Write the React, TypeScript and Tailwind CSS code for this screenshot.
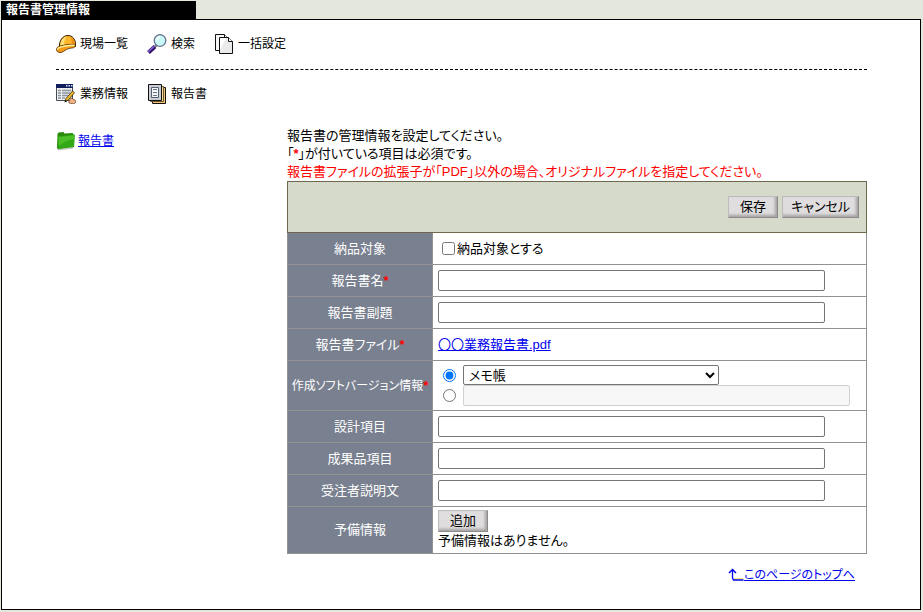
import { useState } from "react";
import type { ReactNode } from "react";

function HelmetIcon() {
  return (
    <svg width="20" height="20" viewBox="0 0 20 20" aria-hidden="true">
      <path
        d="M3.500 13.500C2.800 7 6.500 1.500 12 1.500c4.500 0 7.500 4 7.500 8.500v2.500z"
        fill="#fdb52a"
        stroke="#2e1800"
      />
      <path d="M4.500 12C4 7 7 3.200 10.800 2.200 9 4.500 8 7.500 8.300 11.500z" fill="#ffe07a" />
      <path d="M15 3c2.500 1.500 3.800 4 3.800 7.500H16z" fill="#ee8e10" />
      <path
        d="M.5 15.500c0-1.800 1.500-3 3.500-3.500 4.500-1 9-2 15.300-1.500.5 1.500-.3 3-2 3.300-2.800.5-4.800.5-6.800 1.700-2 1.200-4 3-6.500 3-2.200 0-3.500-1.200-3.500-3z"
        fill="#f59b14"
        stroke="#4a2800"
        strokeWidth=".8"
      />
      <path
        d="M1.500 15.500c.5-1.800 2.500-2.500 5-2.900 4-.7 8-1.600 12-1.300"
        fill="none"
        stroke="#fff0a0"
        strokeWidth="1.400"
      />
    </svg>
  );
}

function SearchIcon() {
  return (
    <svg width="20" height="20" viewBox="0 0 20 20" aria-hidden="true">
      <path d="M1.500 18.500 8 12.500" stroke="#2c1266" strokeWidth="4" />
      <path d="M1 18 7.500 12" stroke="#8a62d8" strokeWidth="1.500" />
      <path d="m8 12.500 2-2" stroke="#777" strokeWidth="2.500" />
      <circle cx="13" cy="6.500" r="5.800" fill="#c9f8f8" stroke="#68718c" strokeWidth="1.300" />
      <path d="M10 6.500A3.500 3.500 0 0 1 13 3" fill="none" stroke="#fff" strokeWidth="1.500" />
    </svg>
  );
}

function CopyIcon() {
  return (
    <svg width="20" height="20" viewBox="0 0 20 20" aria-hidden="true">
      <path d="M1.500.5h9l3 3v13h-12z" fill="#f6f6f6" stroke="#111" />
      <path d="M10.500.5v3h3" fill="#fff" stroke="#111" />
      <path d="M5.500 3.500h9l4 4v12h-13z" fill="#ebebeb" stroke="#111" />
      <path d="M6 4h6l-6 12z" fill="#fff" />
      <path d="M14.500 3.500v4h4" fill="#fff" stroke="#111" />
    </svg>
  );
}

function WorkIcon() {
  return (
    <svg width="20" height="20" viewBox="0 0 20 20" aria-hidden="true">
      <path d="M.5.5h16v16H.5z" fill="#eeeeea" stroke="#444b55" />
      <path d="M0 0h17v4H0z" fill="#101f5c" />
      <path d="M10 1h1.500v1.500H10zM12.500 1H14v1.500h-1.500zM15 1h1.500v1.500H15z" fill="#dce4ff" />
      <path
        d="M2 6.500h3M6 6.500h9M2 9h3M6 9h8M2 11.500h3M6 11.500h6M2 14h3M6 14h3"
        stroke="#8b95a2"
        strokeWidth="1.300"
      />
      <path d="m13 17 2-3 4 2 1 2-2 2-5-1z" fill="#efb389" stroke="#70401e" strokeWidth=".7" />
      <path d="m9 17.500 1-3L16.500 7l2 1.700-6.500 7.500z" fill="#f4bd2d" stroke="#2e2100" strokeWidth=".8" />
      <path d="m8.500 18.500.8-2.500 2 1.300z" fill="#111" />
    </svg>
  );
}

function ReportIcon() {
  return (
    <svg width="20" height="20" viewBox="0 0 20 20" aria-hidden="true">
      <path d="M5.500 3.500h13v16h-13z" fill="#f1c678" stroke="#17110a" />
      <path d="M3.500 2.500h13v15h-13z" fill="#fbdc9c" stroke="#6b5730" />
      <path d="M1.500.5h13v16h-13z" fill="#c9ced4" stroke="#111" />
      <path d="M4.500 3.500h7v10h-7z" fill="#f2f4f7" stroke="#566070" />
      <path d="M6 5.500h4M6 8.500h4M6 11.500h4" stroke="#6b7483" />
    </svg>
  );
}

function FolderIcon() {
  return (
    <svg width="20" height="20" viewBox="0 0 20 20" aria-hidden="true">
      <path d="M.500 16.500 18 16l-1 1.500L2 19.500z" fill="#c4c4c4" />
      <path d="M1.500 3 2.500 1.500l5-.5 1 1.500 8-.5 1 1v12L2 18l-1-1.500z" fill="#278c08" />
      <path d="m2 5.500 17-2-1 12.500-15.500 2z" fill="#31a814" />
      <path d="M2.500 6 18.500 4.200l-.5 4C12 9 7 11 2.700 15z" fill="#65d33c" opacity=".5" />
    </svg>
  );
}

function TopArrowIcon() {
  return (
    <svg width="16" height="14" viewBox="0 0 16 14" aria-hidden="true">
      <path d="M4.500 2v8l1 2h10" fill="none" stroke="#0000ee" strokeWidth="1.300" />
      <path d="M1 5 4.500 1.500 8 5" fill="none" stroke="#0000ee" strokeWidth="1.500" />
      <path d="M6 10.500h9" stroke="#f2e56b" />
    </svg>
  );
}

function NavItem({ icon, label }: { icon: ReactNode; label: string }) {
  return (
    <a href="#" className="flex h-5 items-center gap-1 text-xs text-black">
      {icon}
      {label}
    </a>
  );
}

function GrayButton({ children }: { children: ReactNode }) {
  return (
    <button
      type="button"
      className="h-[22px] min-w-[50px] cursor-pointer border border-t-[#bdbbbb] border-r-[#8c8a8a] border-b-[#8c8a8a] border-l-[#bdbbbb] bg-[#dfdddd] px-2 text-[13px] leading-5 text-black shadow-[inset_-2px_-2px_3px_#a3a1a1]"
    >
      {children}
    </button>
  );
}

function Row({
  label,
  htmlFor,
  required,
  labelClass = "",
  children,
}: {
  label: string;
  htmlFor?: string;
  required?: boolean;
  labelClass?: string;
  children: ReactNode;
}) {
  return (
    <tr className="h-8">
      <th
        scope="row"
        className="w-[145px] border border-[#919191] bg-[#79808f] text-center font-normal whitespace-nowrap text-white"
      >
        <label htmlFor={htmlFor} className={labelClass}>
          {label}
        </label>
        {required && <span className="font-bold text-[#ff0000]">*</span>}
      </th>
      <td className="border border-[#919191] bg-white px-[5px]">{children}</td>
    </tr>
  );
}

const inputClass =
  "block h-[21px] w-[387px] max-w-full rounded-[2px] border border-[#767676] bg-white px-1 disabled:border-[#d0d0d0] disabled:bg-[#f7f7f7]";

export default function App() {
  const [software, setSoftware] = useState("list");

  return (
    <div
      id="top"
      className="min-h-screen bg-[#e4e7dc] pt-px pr-[2px] pb-[2px] pl-px font-['Liberation_Sans','Noto_Sans_CJK_JP',sans-serif] text-[13px] leading-[18px] text-black [font-feature-settings:'palt']"
    >
      <h1 className="h-[18px] w-[195px] bg-black pl-[5px] text-xs leading-[18px] font-bold text-white">
        報告書管理情報
      </h1>

      <main className="border border-black bg-white pt-[14px] pr-[53px] pb-[25px] pl-[54px]">
        <nav className="flex gap-[19px]">
          <NavItem icon={<HelmetIcon />} label="現場一覧" />
          <NavItem icon={<SearchIcon />} label="検索" />
          <NavItem icon={<CopyIcon />} label="一括設定" />
        </nav>
        <hr className="mt-[15px] mb-[14px] border-t border-dashed border-black" />
        <nav className="flex gap-[19px]">
          <NavItem icon={<WorkIcon />} label="業務情報" />
          <NavItem icon={<ReportIcon />} label="報告書" />
        </nav>

        <div className="mt-[23px] flex">
          {/* ツリー */}
          <aside className="w-[231px] shrink-0 pt-1">
            <div className="flex items-center gap-[2px] text-xs">
              <FolderIcon />
              <a href="#" className="text-[#0000ee] underline">
                報告書
              </a>
            </div>
          </aside>

          {/* 管理情報フォーム */}
          <form className="min-w-0 flex-1">
            <p>報告書の管理情報を設定してください。</p>
            <p>
              「<span className="font-bold text-[#ff0000]">*</span>」が付いている項目は必須です。
            </p>
            <p className="text-[#ff0000]">
              報告書ファイルの拡張子が「PDF」以外の場合、オリジナルファイルを指定してください。
            </p>

            <table className="w-full border-collapse">
              <thead>
                <tr className="h-[51px]">
                  <td colSpan={2} className="border border-[#6f684f] bg-[#d6dacb] pr-[7px]">
                    <div className="flex justify-end gap-1">
                      <GrayButton>保存</GrayButton>
                      <GrayButton>キャンセル</GrayButton>
                    </div>
                  </td>
                </tr>
              </thead>
              <tbody>
                <Row label="納品対象">
                  <label className="flex items-center gap-[2px] pl-1">
                    <input type="checkbox" className="size-[13px]" />
                    納品対象とする
                  </label>
                </Row>
                <Row label="報告書名" htmlFor="name" required>
                  <input id="name" type="text" className={inputClass} />
                </Row>
                <Row label="報告書副題" htmlFor="subtitle">
                  <input id="subtitle" type="text" className={inputClass} />
                </Row>
                <Row label="報告書ファイル" required>
                  <a href="#" className="text-[#0000ee] underline">
                    〇〇業務報告書.pdf
                  </a>
                </Row>
                <Row
                  label="作成ソフトバージョン情報"
                  htmlFor="software"
                  labelClass="text-xs"
                  required
                >
                  <div className="flex flex-col py-1">
                    <div className="flex items-center gap-[7px] pl-[5px]">
                      <input
                        type="radio"
                        name="software-type"
                        aria-label="一覧から選択"
                        checked={software === "list"}
                        onChange={() => setSoftware("list")}
                        className="size-[13px]"
                      />
                      <select
                        id="software"
                        disabled={software !== "list"}
                        className="h-5 w-64 rounded-[2px] border border-[#767676] bg-white pl-px"
                      >
                        <option>メモ帳</option>
                      </select>
                    </div>
                    <div className="flex items-center gap-[7px] pl-[5px]">
                      <input
                        type="radio"
                        name="software-type"
                        aria-label="直接入力"
                        checked={software === "text"}
                        onChange={() => setSoftware("text")}
                        className="size-[13px]"
                      />
                      <input
                        type="text"
                        aria-label="ソフト名"
                        disabled={software !== "text"}
                        className={inputClass}
                      />
                    </div>
                  </div>
                </Row>
                <Row label="設計項目" htmlFor="design">
                  <input id="design" type="text" className={inputClass} />
                </Row>
                <Row label="成果品項目" htmlFor="product">
                  <input id="product" type="text" className={inputClass} />
                </Row>
                <Row label="受注者説明文" htmlFor="description">
                  <input id="description" type="text" className={inputClass} />
                </Row>
                <Row label="予備情報">
                  <div className="py-[3px]">
                    <GrayButton>追加</GrayButton>
                    <p>予備情報はありません。</p>
                  </div>
                </Row>
              </tbody>
            </table>

            <div className="mt-3 flex justify-end pr-3">
              <a href="#top" className="flex items-center text-xs leading-[18px] text-[#0000ee] underline">
                <TopArrowIcon />
                このページのトップへ
              </a>
            </div>
          </form>
        </div>
      </main>
    </div>
  );
}
